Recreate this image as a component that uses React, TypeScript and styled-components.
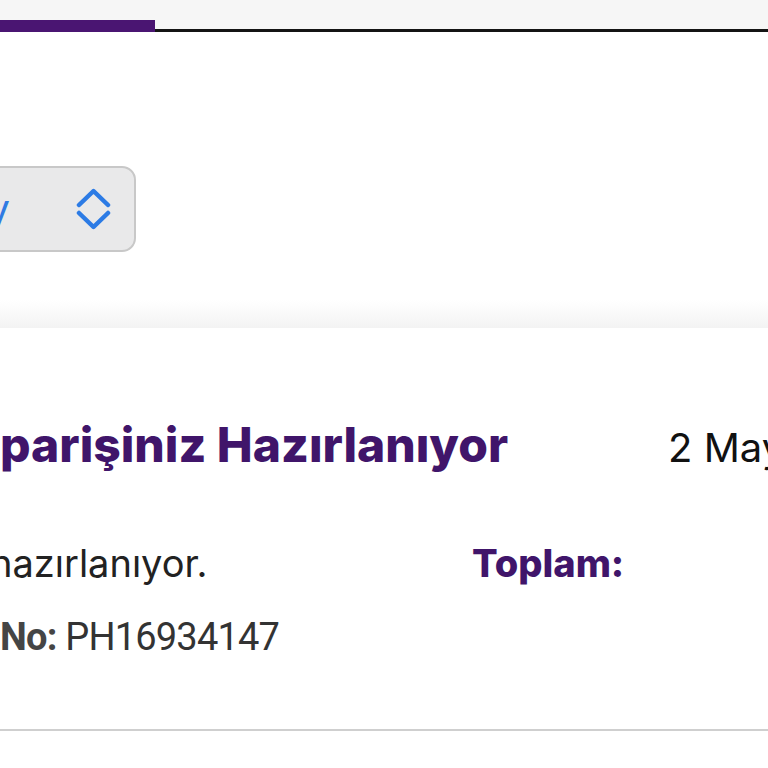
import styled, { createGlobalStyle } from "styled-components"

const GlobalStyle = createGlobalStyle`
    html, body {
        margin: 0;
        padding: 0;
        background: #ffffff;
        overflow: hidden;
    }
    body {
        width: 768px;
        font-family: Inter, "Noto Sans", sans-serif;
    }
`

const Page = styled.div`
    width: 768px;
    height: 768px;
    overflow: hidden;
    display: flex;
    flex-direction: column;
`

const TabBar = styled.div`
    height: 29px;
    background: #f6f6f6;
    border-bottom: 3px solid #141414;
    display: flex;
    align-items: flex-end;
`

const ActiveTab = styled.div`
    width: 155px;
    height: 12px;
    margin-bottom: -3px;
    background: #4a1572;
`

const FilterSection = styled.div`
    height: 296px;
    box-sizing: border-box;
    padding-top: 134px;
    background: linear-gradient(to bottom, #ffffff 0, #ffffff 268px, #f3f3f3 100%);
`

const SelectBox = styled.div`
    display: inline-flex;
    align-items: center;
    gap: 66px;
    height: 86px;
    box-sizing: border-box;
    margin-left: -40px;
    padding: 0 23px 0 40px;
    background: #e9e9ea;
    border: 2px solid #c8c8c8;
    border-radius: 14px;
`

// text runs off the left edge, only its tail is visible
const Overflowing = styled.span<{ $visible: number }>`
    display: inline-block;
    width: ${({ $visible }) => $visible}px;
    direction: rtl;
    white-space: nowrap;
`

const SelectLabel = styled(Overflowing)`
    font-size: 40px;
    line-height: 48px;
    color: #2f7be3;
`

const Card = styled.div`
    padding-top: 87px;
    display: grid;
    grid-template-columns: 472px 196px 1fr;
    align-items: baseline;
`

const Title = styled.h2`
    grid-column: 1 / 3;
    margin: 0;
    font-size: 48px;
    line-height: 60px;
    font-weight: 800;
    color: #40156a;
    white-space: nowrap;
`

const DateText = styled.div`
    font-size: 40px;
    line-height: 60px;
    color: #111111;
    white-space: nowrap;
`

const BodyText = styled.div<{ $shift?: number }>`
    margin-top: 63px;
    margin-left: ${({ $shift }) => $shift ?? 0}px;
    font-size: 38px;
    line-height: 44px;
    color: #222222;
    white-space: nowrap;
`

const TotalLabel = styled.div`
    grid-column: 2 / 4;
    margin-top: 63px;
    font-size: 38px;
    line-height: 44px;
    font-weight: 800;
    color: #40156a;
`

const OrderNo = styled.div`
    grid-column: 1 / 4;
    margin-top: 30px;
    font-family: Roboto, "Liberation Sans", sans-serif;
    font-size: 38px;
    line-height: 44px;
    color: #333333;
    white-space: nowrap;
    letter-spacing: -0.8px;
`

const NoLabel = styled.b`
    font-weight: 700;
    color: #454545;
`

const Divider = styled.hr`
    grid-column: 1 / 4;
    width: 100%;
    margin: 70px 0 0;
    border: none;
    border-top: 2px solid #cfcfcf;
`

const Chevrons = () => (
    <svg width="35" height="42" viewBox="0 0 35 42" fill="none">
        <path
            d="M3 17 L17.5 3 L32 17 M3 25 L17.5 39 L32 25"
            stroke="#2c7be5"
            strokeWidth="4.5"
            strokeLinecap="round"
            strokeLinejoin="round"
        />
    </svg>
)

const App = () => {
    return (
        <Page>
            <GlobalStyle />
            <TabBar>
                <ActiveTab />
            </TabBar>
            <FilterSection>
                <SelectBox>
                    <SelectLabel $visible={8}>Son 3 Ay</SelectLabel>
                    <Chevrons />
                </SelectBox>
            </FilterSection>
            <Card>
                <Title>
                    <Overflowing $visible={0}>Si</Overflowing>parişiniz Hazırlanıyor
                </Title>
                <DateText>2 Mayıs 2024</DateText>
                <BodyText $shift={-10}>hazırlanıyor.</BodyText>
                <TotalLabel>Toplam:</TotalLabel>
                <OrderNo>
                    <NoLabel>No:</NoLabel> PH16934147
                </OrderNo>
                <Divider />
            </Card>
        </Page>
    )
}

export default App
